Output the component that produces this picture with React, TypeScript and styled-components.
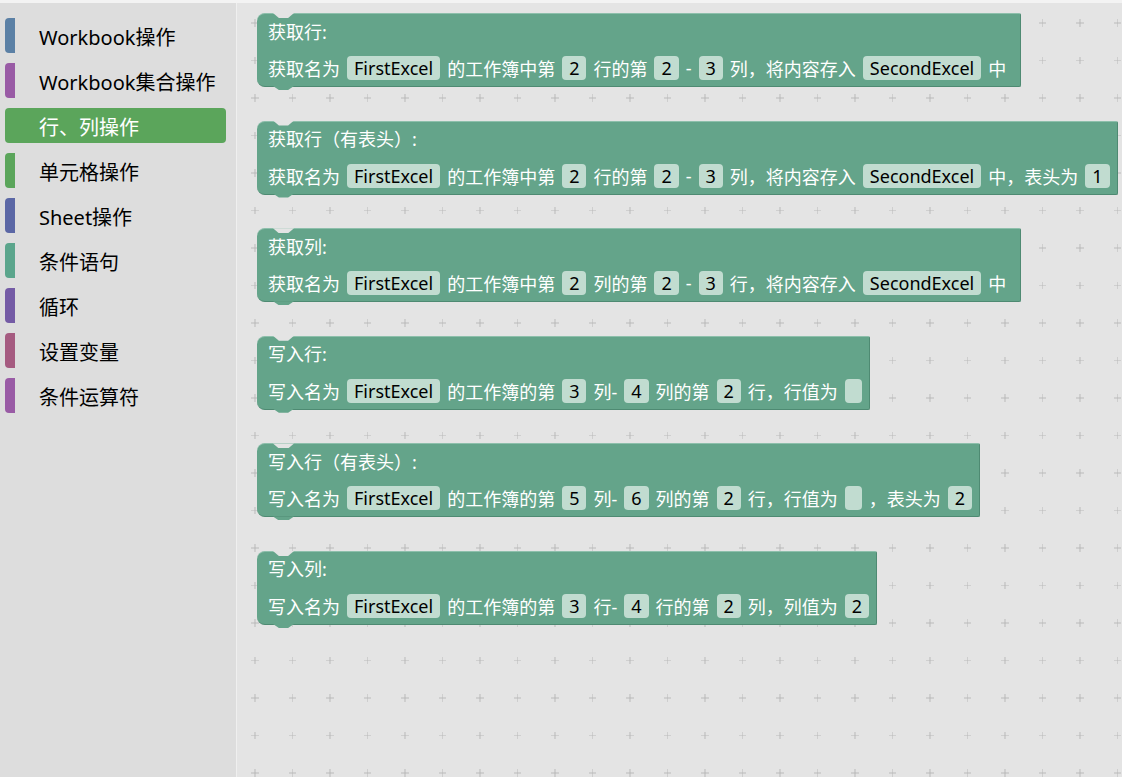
import React from 'react';
import styled, { createGlobalStyle } from 'styled-components';

const GlobalStyle = createGlobalStyle`
    html, body {
        margin: 0;
        padding: 0;
        overflow: hidden;
    }
    body {
        font-family: "Noto Sans", "Noto Sans CJK SC", sans-serif;
    }
`

type Seg = string | { field: string };

interface BlockData {
    title: string;
    line: Seg[];
}

const categories = [
    { name: 'Workbook操作', color: '#5b80a5' },
    { name: 'Workbook集合操作', color: '#995ba5' },
    { name: '行、列操作', color: '#5ba55b', selected: true },
    { name: '单元格操作', color: '#5ba55b' },
    { name: 'Sheet操作', color: '#5b67a5' },
    { name: '条件语句', color: '#5ba58c' },
    { name: '循环', color: '#745ba5' },
    { name: '设置变量', color: '#a55b80' },
    { name: '条件运算符', color: '#995ba5' },
];

const f = (field: string) => ({ field });

const blocks: BlockData[] = [
    {
        title: '获取行:',
        line: ['获取名为', f('FirstExcel'), '的工作簿中第', f('2'), '行的第', f('2'), '-', f('3'), '列，将内容存入', f('SecondExcel'), '中'],
    },
    {
        title: '获取行（有表头）:',
        line: ['获取名为', f('FirstExcel'), '的工作簿中第', f('2'), '行的第', f('2'), '-', f('3'), '列，将内容存入', f('SecondExcel'), '中，表头为', f('1')],
    },
    {
        title: '获取列:',
        line: ['获取名为', f('FirstExcel'), '的工作簿中第', f('2'), '列的第', f('2'), '-', f('3'), '行，将内容存入', f('SecondExcel'), '中'],
    },
    {
        title: '写入行:',
        line: ['写入名为', f('FirstExcel'), '的工作簿的第', f('3'), '列-', f('4'), '列的第', f('2'), '行，行值为', f('')],
    },
    {
        title: '写入行（有表头）:',
        line: ['写入名为', f('FirstExcel'), '的工作簿的第', f('5'), '列-', f('6'), '列的第', f('2'), '行，行值为', f(''), '，表头为', f('2')],
    },
    {
        title: '写入列:',
        line: ['写入名为', f('FirstExcel'), '的工作簿的第', f('3'), '行-', f('4'), '行的第', f('2'), '列，列值为', f('2')],
    },
];

function App() {
    return (
        <>
            <GlobalStyle />
            <Page>
                <TopStrip />
                <Main>
                    <Sidebar>
                        {categories.map((c) => (
                            <Category key={c.name} $color={c.color} $selected={!!c.selected}>
                                {c.name}
                            </Category>
                        ))}
                    </Sidebar>
                    <Workspace>
                        {blocks.map((b, i) => (
                            <Block key={i}>
                                <Row $title>{b.title}</Row>
                                <Row>
                                    {b.line.map((s, j) =>
                                        typeof s === 'string'
                                            ? <span key={j}>{s}</span>
                                            : <Field key={j} $empty={s.field === ''}>{s.field}</Field>
                                    )}
                                </Row>
                            </Block>
                        ))}
                    </Workspace>
                </Main>
            </Page>
        </>
    );
}

export default App;

const gridSvg = encodeURIComponent(
    "<svg xmlns='http://www.w3.org/2000/svg' width='37.5' height='37.5'>" +
    "<path d='M14.75 18.75h8M18.75 14.75v8' stroke='#b9b9b9' stroke-width='1' fill='none'/></svg>"
);

const Page = styled.div`
    width: 1122px;
    height: 777px;
    display: flex;
    flex-direction: column;
    background: #e4e4e4;
`

const TopStrip = styled.div`
    height: 3px;
    background: #f3f3f3;
    flex-shrink: 0;
`

const Main = styled.div`
    flex: 1;
    display: flex;
    min-height: 0;
`

const Sidebar = styled.div`
    width: 237px;
    flex-shrink: 0;
    box-sizing: border-box;
    background: #dddddd;
    border-right: 1px solid #efefef;
    padding: 15px 10px 0 5px;
    display: flex;
    flex-direction: column;
    gap: 10px;
`

const Category = styled.div<{ $color: string; $selected: boolean }>`
    height: 35px;
    box-sizing: border-box;
    display: flex;
    align-items: center;
    padding-top: 2px;
    border-left: 10px solid ${(p) => p.$color};
    border-radius: 4px;
    padding-left: 24px;
    font-size: 20px;
    color: ${(p) => (p.$selected ? '#ffffff' : '#000000')};
    background: ${(p) => (p.$selected ? p.$color : 'transparent')};
    white-space: nowrap;
`

const Workspace = styled.div`
    flex: 1;
    background-color: #e4e4e4;
    background-image: url("data:image/svg+xml,${gridSvg}");
    background-size: 37.5px 37.5px;
    background-position: -0.75px 1.25px;
    padding: 10px 0 0 20px;
    display: flex;
    flex-direction: column;
    align-items: flex-start;
    gap: 33.6px;
    overflow: hidden;
`

const Block = styled.div`
    position: relative;
    display: flex;
    flex-direction: column;
    background: #64a48a;
    border-top: 1px solid #8dbfab;
    border-right: 1px solid #4e8a72;
    border-bottom: 1px solid #4e8a72;
    border-radius: 8px 2px 2px 8px;
    padding: 0 14px 0 11px;
    color: #ffffff;
    font-size: 18px;
    white-space: nowrap;

    &::before {
        content: '';
        position: absolute;
        top: -1px;
        left: 16px;
        width: 21px;
        height: 5px;
        background: #e4e4e4;
        clip-path: polygon(0 0, 100% 0, 72% 100%, 28% 100%);
    }

    &::after {
        content: '';
        position: absolute;
        top: 100%;
        left: 16px;
        width: 21px;
        height: 4px;
        background: #64a48a;
        clip-path: polygon(0 0, 100% 0, 72% 100%, 28% 100%);
    }
`

const Row = styled.div<{ $title?: boolean }>`
    height: 36px;
    display: flex;
    align-items: center;
    gap: 7px;
    padding-bottom: ${(p) => (p.$title ? '3px' : '0')};
    box-sizing: border-box;
`

const Field = styled.span<{ $empty: boolean }>`
    height: 24px;
    box-sizing: border-box;
    display: inline-flex;
    align-items: center;
    justify-content: center;
    padding: 0 7px;
    min-width: ${(p) => (p.$empty ? '17px' : '23px')};
    border-radius: 4px;
    background: #c1dcd0;
    color: #000000;

    &:last-child {
        margin-right: -7px;
    }
`
